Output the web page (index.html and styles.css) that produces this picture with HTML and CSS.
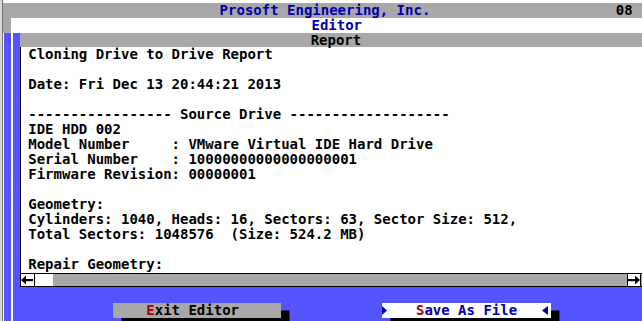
FILE: index.html
```html
<!DOCTYPE html>

<html>

<head>
	<link rel="stylesheet" href="styles.css">
</head>

<body>
	<div id="screen">
		<div class="bar title-bar">
			<span class="title-text">Prosoft Engineering, Inc.</span>
			<span class="page-no">08</span>
		</div>
		<div class="bar menu-bar">
			<span class="menu-fill">Editor</span>
		</div>
		<div class="bar head-bar">Report</div>

		<div id="report">
			<pre class="lines">Cloning Drive to Drive Report

Date: Fri Dec 13 20:44:21 2013

----------------- Source Drive -------------------
IDE HDD 002
Model Number     : VMware Virtual IDE Hard Drive
Serial Number    : 10000000000000000001
Firmware Revision: 00000001

Geometry:
Cylinders: 1040, Heads: 16, Sectors: 63, Sector Size: 512,
Total Sectors: 1048576  (Size: 524.2 MB)

Repair Geometry:</pre>
			<div class="hscroll">
				<span class="arrow arrow-left">
					<svg width="12" height="10" viewBox="0 0 12 10"><polygon points="0,5 5,0.5 5,9.5" fill="#000"/><rect x="4" y="4" width="8" height="2.2" fill="#000"/></svg>
				</span>
				<span class="thumb"></span>
				<span class="track"></span>
				<span class="arrow arrow-right">
					<svg width="12" height="10" viewBox="0 0 12 10"><polygon points="12,5 7,0.5 7,9.5" fill="#000"/><rect x="0" y="4" width="8" height="2.2" fill="#000"/></svg>
				</span>
			</div>
		</div>

		<div class="buttons">
			<div class="btn btn-exit"><span class="hot">E</span>xit Editor</div>
			<div class="btn btn-save">
				<svg class="mark" width="5" height="9" viewBox="0 0 5 9"><polygon points="0,0 5,4.5 0,9" fill="#0000aa"/></svg>
				<span class="save-label"><span class="hot">S</span>ave As File</span>
				<svg class="mark mark-end" width="6" height="9" viewBox="0 0 6 9"><polygon points="6,0 0,4.5 6,9" fill="#0000aa"/></svg>
			</div>
		</div>
	</div>
</body>

</html>
```

FILE: styles.css
```css
body {
	margin: 0;
	overflow: hidden;
	background: linear-gradient(to right, #d9d9d9 0 2px, #707070 2px 3px, #fff 3px);
	font-family: "DejaVu Sans Mono", monospace;
	font-weight: bold;
	font-size: 14.014px;
	line-height: 15px;
}

#screen {
	margin: 3px 0 0 3px;
	width: 639px;
	height: 318px;
	overflow: hidden;
	background: linear-gradient(to right, #fff 0 1px, #5555ff 1px 8px, #fff 8px 10px, #5555ff 10px);
}

.bar {
	display: flex;
	height: 15px;
	white-space: pre;
}

.title-bar {
	background: #a8a8a8;
	padding-left: 25.7ch;
}

.title-text {
	color: #0000aa;
}

.page-no {
	margin-left: 22ch;
	color: #000;
}

.menu-bar {
	background: #a8a8a8;
}

.menu-fill {
	flex: 1;
	margin-left: 1ch;
	padding-left: 35.6ch;
	background: #fff;
	color: #0000aa;
}

.head-bar {
	margin-left: 2ch;
	padding-left: 34.5ch;
	background: #a8a8a8;
	color: #000;
}

#report {
	margin-left: 2ch;
	background: #fff;
	border-left: 1px solid #000;
}

.lines {
	margin: -1px 0 1px;
	padding-left: calc(1ch - 1px);
	height: 225px;
	font: inherit;
	color: #000;
}

.hscroll {
	display: flex;
	height: 12px;
	border-top: 1px solid #000;
	border-bottom: 1px solid #000;
	background: #a8a8a8;
}

.arrow {
	display: flex;
	align-items: center;
	justify-content: center;
	width: 13px;
	background: #fff;
}

.arrow-left {
	border-right: 1px solid #000;
}

.arrow-right {
	width: 12px;
	border-left: 1px solid #000;
	border-right: 1px solid #000;
	margin-right: 1px;
}

.thumb {
	width: 18px;
	background: #fff;
}

.track {
	flex: 1;
}

.buttons {
	display: flex;
	padding-top: 16px;
}

.btn {
	display: flex;
	align-items: center;
	box-sizing: border-box;
	width: 20ch;
	height: 15px;
	white-space: pre;
	box-shadow: 1ch 7.5px 0 #000;
}

.btn-exit {
	margin-left: 13ch;
	padding-left: 4ch;
	background: #a8a8a8;
	color: #000;
}

.btn-save {
	margin-left: 12ch;
	background: #fff;
	color: #0000aa;
}

.save-label {
	margin-left: calc(4ch - 5px);
}

.mark-end {
	margin-left: auto;
	margin-right: 3px;
}

.hot {
	color: #aa0000;
}
```
